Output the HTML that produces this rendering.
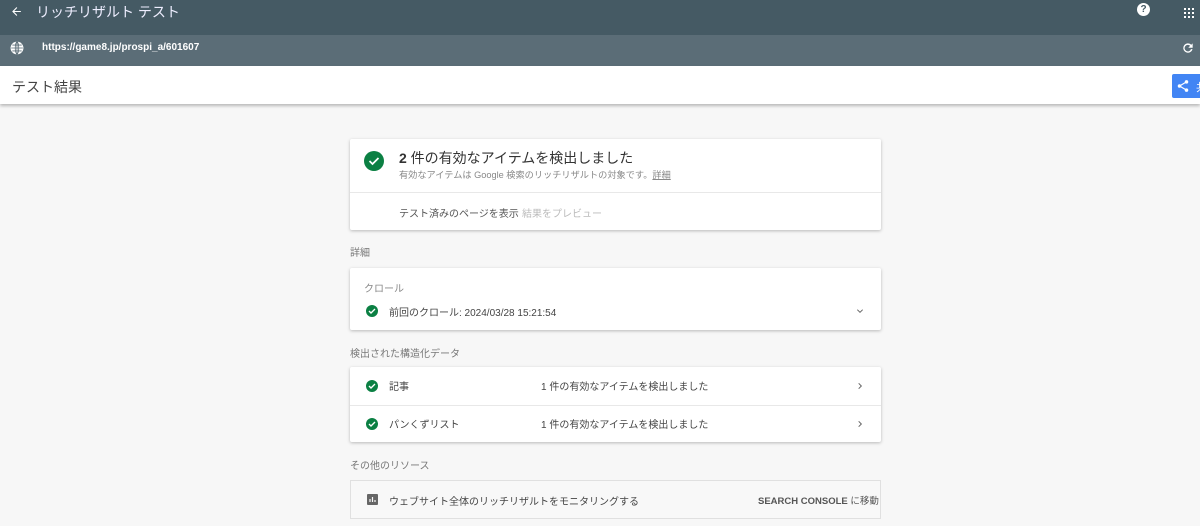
<!DOCTYPE html>
<html><head><meta charset="utf-8"><style>
*{margin:0;padding:0;box-sizing:border-box}
body{width:1200px;height:526px;overflow:hidden;background:#f7f7f7;font-family:"Liberation Sans","Noto Sans CJK JP",sans-serif;color:#333;position:relative}
.top{position:absolute;left:0;top:0;width:1200px;height:35px;background:#455a64;color:#fff}
.url{position:absolute;left:0;top:35px;width:1200px;height:31px;background:#5b6d77;color:#fff}
.res{position:absolute;left:0;top:66px;width:1200px;height:38px;background:#fff;box-shadow:0 2px 3px rgba(0,0,0,.25)}
.card{position:absolute;left:350px;width:531px;background:#fff;box-shadow:0 1px 3px rgba(0,0,0,.25);border-radius:2px}
.abs{position:absolute;white-space:nowrap}
.chk{position:absolute;border-radius:50%;background:#0b8043}
.sec{position:absolute;left:350px;font-size:10px;color:#777}
</style></head><body>
<div class="top">
 <svg class="abs" style="left:10px;top:5px" width="13" height="13" viewBox="0 0 24 24"><path d="M20 11H7.8l5.6-5.6L12 4l-8 8 8 8 1.4-1.4L7.8 13H20z" fill="#fff"/></svg>
 <div class="abs" style="left:36px;top:2px;font-size:14px;color:#eef">リッチリザルト テスト</div>
 <div class="abs" style="left:1137px;top:3px;width:13px;height:13px;border-radius:50%;background:#fff;color:#455a64;font-size:10px;font-weight:bold;text-align:center;line-height:13px">?</div>
 <svg class="abs" style="left:1184px;top:8px" width="10" height="10" viewBox="0 0 10 10" fill="#fff"><rect x="0" y="0" width="2" height="2"/><rect x="4" y="0" width="2" height="2"/><rect x="8" y="0" width="2" height="2"/><rect x="0" y="4" width="2" height="2"/><rect x="4" y="4" width="2" height="2"/><rect x="8" y="4" width="2" height="2"/><rect x="0" y="8" width="2" height="2"/><rect x="4" y="8" width="2" height="2"/><rect x="8" y="8" width="2" height="2"/></svg>
</div>
<div class="url">
 <svg class="abs" style="left:10px;top:6px" width="14" height="14" viewBox="0 0 24 24"><circle cx="12" cy="12" r="11" fill="#fff"/><path d="M2 12h20M12 1v22M4 7h16M4 17h16M12 1c-4 4-4 18 0 22M12 1c4 4 4 18 0 22" stroke="#5b6d77" stroke-width="1.4" fill="none"/></svg>
 <div class="abs" style="left:42px;top:7px;font-size:10px;font-weight:bold">https://game8.jp/prospi_a/601607</div>
 <svg class="abs" style="left:1181px;top:6px" width="14" height="14" viewBox="0 0 24 24"><path d="M17.6 6.4A8 8 0 1 0 19.7 14h-2.6a5.6 5.6 0 1 1-1.4-5.8L12.5 11.5H20V4z" fill="#fff"/></svg>
</div>
<div class="res">
 <div class="abs" style="left:12px;top:11px;font-size:14px;color:#444">テスト結果</div>
 <div class="abs" style="left:1172px;top:8px;width:40px;height:24px;background:#4285f4;border-radius:2px;color:#fff;font-size:11px;padding:5px 0 0 24px">共</div>
 <svg class="abs" style="left:1176px;top:13px" width="14" height="14" viewBox="0 0 24 24"><circle cx="18" cy="5" r="3" fill="#fff"/><circle cx="6" cy="12" r="3" fill="#fff"/><circle cx="18" cy="19" r="3" fill="#fff"/><path d="M6 12L18 5M6 12l12 7" stroke="#fff" stroke-width="2"/></svg>
</div>

<div class="card" style="top:139px;height:91px">
 <div class="chk" style="left:14px;top:12px;width:20px;height:20px"></div>
 <svg class="abs" style="left:18px;top:16px" width="12" height="12" viewBox="0 0 24 24"><path d="M3 12l6 6L21 6" stroke="#fff" stroke-width="3.5" fill="none"/></svg>
 <div class="abs" style="left:49px;top:9px;font-size:14px;color:#333"><b>2</b> 件の有効なアイテムを検出しました</div>
 <div class="abs" style="left:49px;top:28px;font-size:9.2px;color:#888">有効なアイテムは Google 検索のリッチリザルトの対象です。<u>詳細</u></div>
 <div class="abs" style="left:0;top:53px;width:531px;border-top:1px solid #e8e8e8"></div>
 <div class="abs" style="left:49px;top:66px;font-size:10px;color:#555">テスト済みのページを表示</div>
 <div class="abs" style="left:172px;top:66px;font-size:10px;color:#bbb">結果をプレビュー</div>
</div>
<div class="sec" style="top:244px">詳細</div>
<div class="card" style="top:268px;height:62px">
 <div class="abs" style="left:14px;top:12px;font-size:10px;color:#888">クロール</div>
 <div class="chk" style="left:16px;top:37px;width:12px;height:12px"></div>
 <svg class="abs" style="left:18px;top:39px" width="8" height="8" viewBox="0 0 24 24"><path d="M3 12l6 6L21 6" stroke="#fff" stroke-width="4" fill="none"/></svg>
 <div class="abs" style="left:39px;top:36px;font-size:10px;color:#444">前回のクロール: 2024/03/28 15:21:54</div>
 <svg class="abs" style="left:506px;top:39px" width="8" height="8" viewBox="0 0 24 24"><path d="M4 8l8 8 8-8" stroke="#666" stroke-width="3" fill="none"/></svg>
</div>
<div class="sec" style="top:345px">検出された構造化データ</div>
<div class="card" style="top:367px;height:75px">
 <div class="chk" style="left:16px;top:13px;width:12px;height:12px"></div>
 <svg class="abs" style="left:18px;top:15px" width="8" height="8" viewBox="0 0 24 24"><path d="M3 12l6 6L21 6" stroke="#fff" stroke-width="4" fill="none"/></svg>
 <div class="abs" style="left:39px;top:11px;font-size:10px;color:#444">記事</div>
 <div class="abs" style="left:191px;top:11px;font-size:10px;color:#444">1 件の有効なアイテムを検出しました</div>
 <svg class="abs" style="left:506px;top:15px" width="8" height="8" viewBox="0 0 24 24"><path d="M8 4l8 8-8 8" stroke="#666" stroke-width="3" fill="none"/></svg>
 <div class="abs" style="left:0;top:38px;width:531px;border-top:1px solid #e8e8e8"></div>
 <div class="chk" style="left:16px;top:51px;width:12px;height:12px"></div>
 <svg class="abs" style="left:18px;top:53px" width="8" height="8" viewBox="0 0 24 24"><path d="M3 12l6 6L21 6" stroke="#fff" stroke-width="4" fill="none"/></svg>
 <div class="abs" style="left:39px;top:49px;font-size:10px;color:#444">パンくずリスト</div>
 <div class="abs" style="left:191px;top:49px;font-size:10px;color:#444">1 件の有効なアイテムを検出しました</div>
 <svg class="abs" style="left:506px;top:53px" width="8" height="8" viewBox="0 0 24 24"><path d="M8 4l8 8-8 8" stroke="#666" stroke-width="3" fill="none"/></svg>
</div>
<div class="sec" style="top:457px">その他のリソース</div>
<div class="abs" style="left:350px;top:480px;width:531px;height:39px;border:1px solid #e0e0e0;background:#f8f8f8">
 <div class="abs" style="left:16px;top:13px;width:11px;height:11px;background:#666;border-radius:1px"></div>
 <svg class="abs" style="left:16px;top:13px" width="11" height="11" viewBox="0 0 11 11"><path d="M3 8V5M5.5 8V3M8 8V6" stroke="#f8f8f8" stroke-width="1.2"/></svg>
 <div class="abs" style="left:38px;top:12px;font-size:10px;color:#444">ウェブサイト全体のリッチリザルトをモニタリングする</div>
 <div class="abs" style="right:0;top:12px;width:122px;font-size:9.5px;color:#555;overflow:hidden"><b>SEARCH CONSOLE</b> に移動</div>
</div>
</body></html>
